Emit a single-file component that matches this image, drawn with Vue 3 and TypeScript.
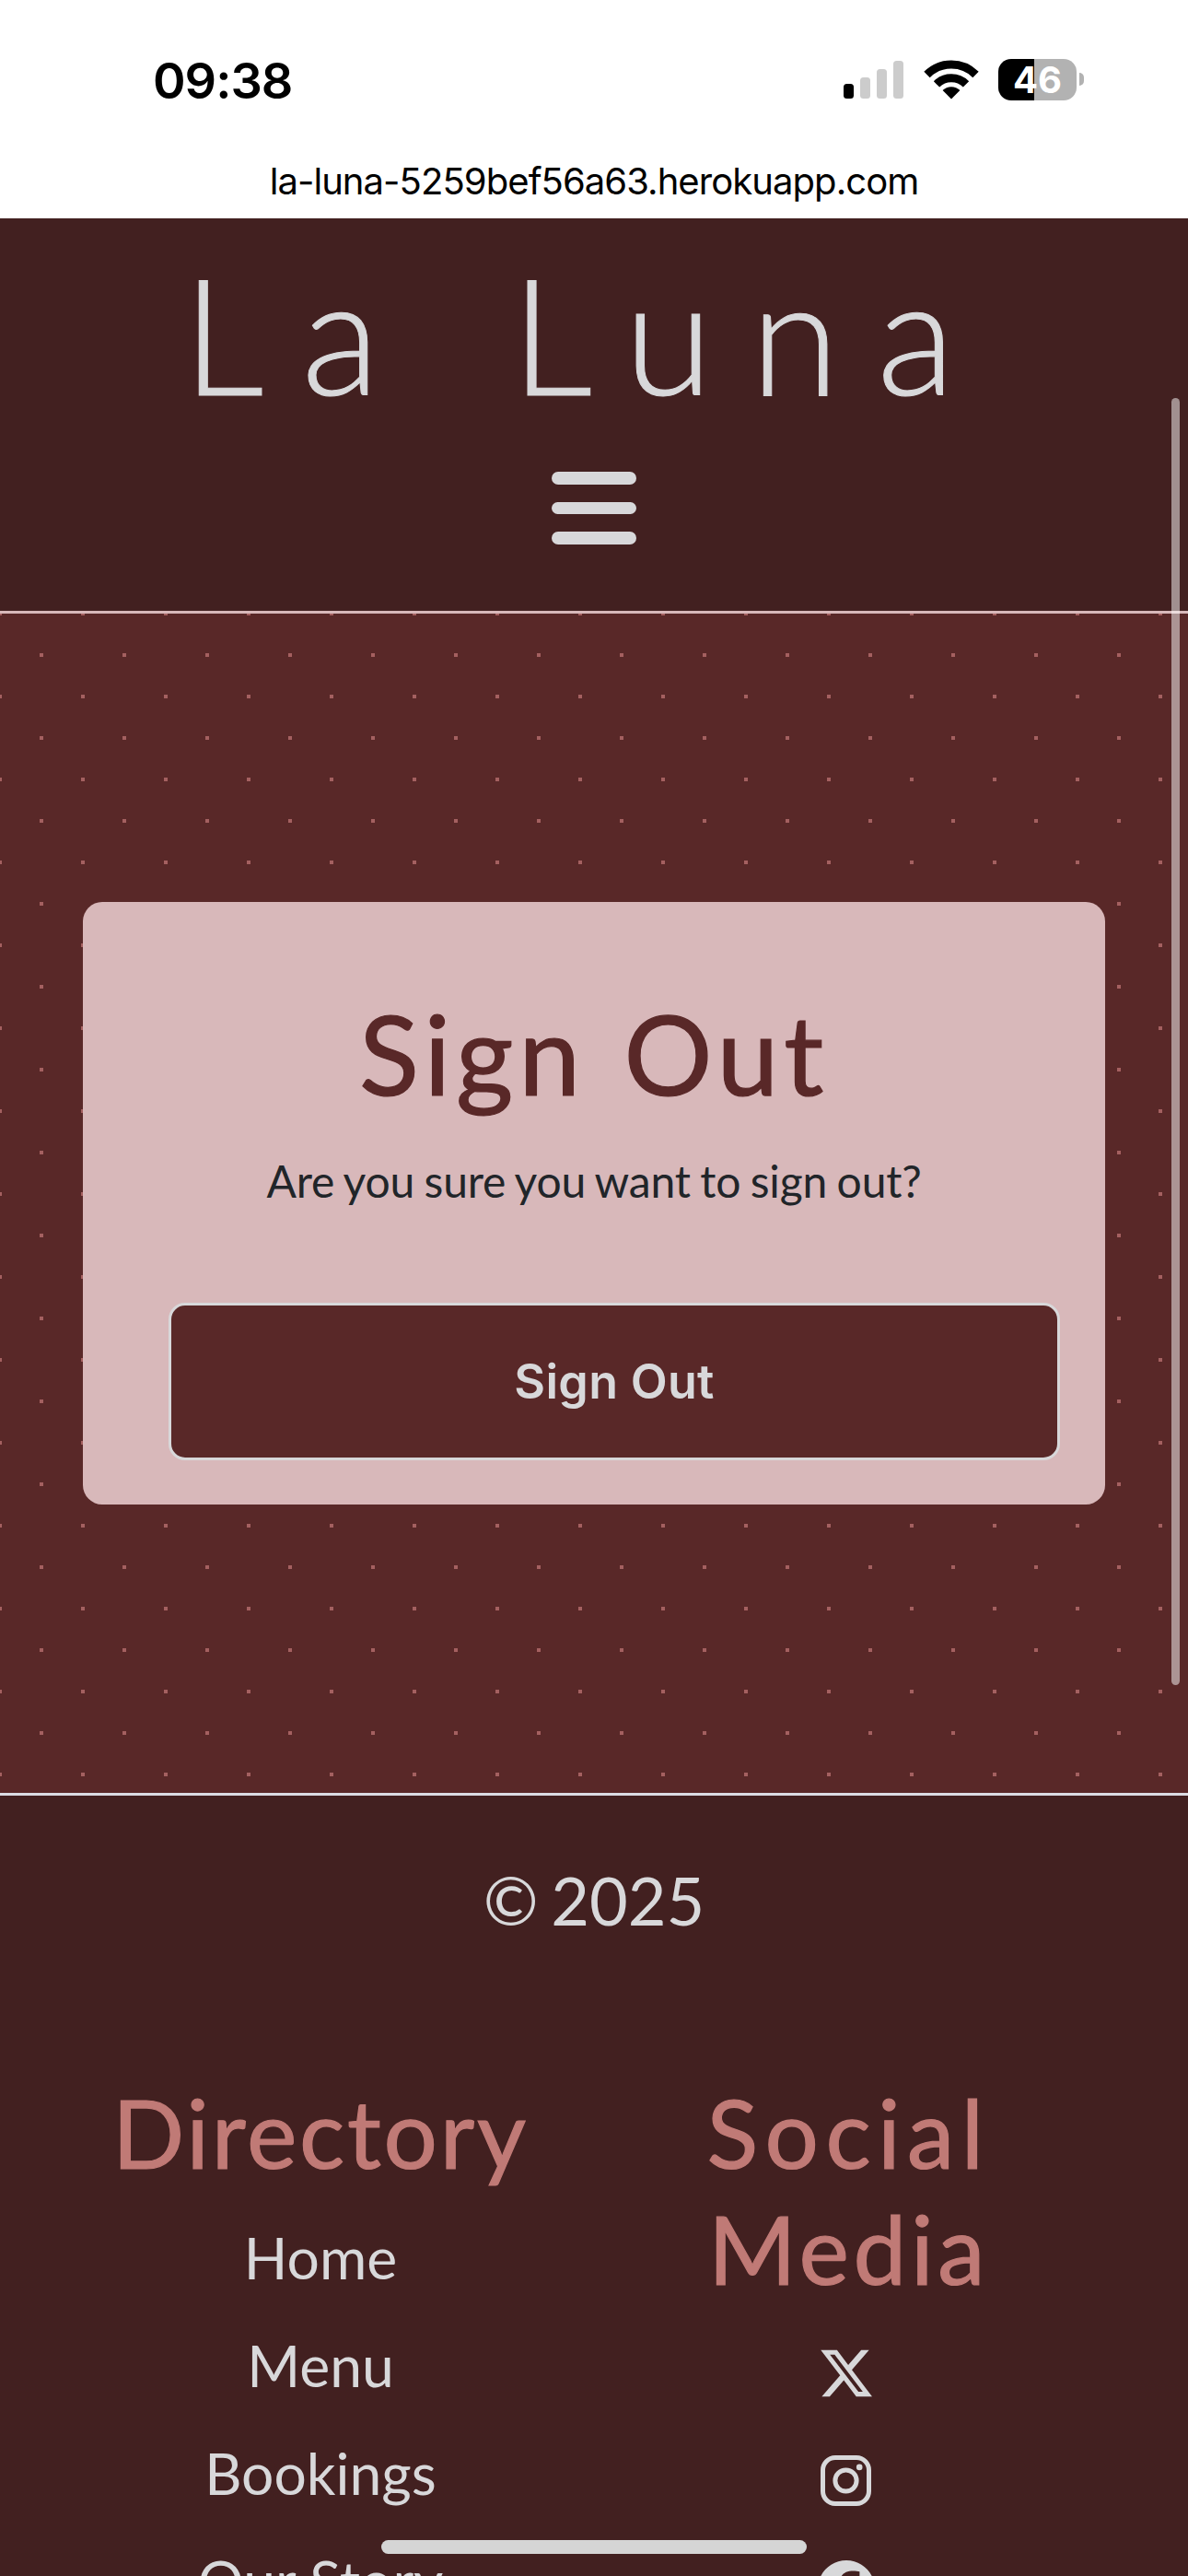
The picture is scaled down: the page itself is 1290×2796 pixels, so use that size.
<script setup lang="ts">
interface SignalBar {
  height: number
  active: boolean
}

const signal: SignalBar[] = [
  { height: 16, active: true },
  { height: 23, active: false },
  { height: 32, active: false },
  { height: 41, active: false },
]

const directory: string[] = ['Home', 'Menu', 'Bookings', 'Our Story']
</script>

<template>
  <div class="screen">
    <div class="status-bar">
      <div class="status-row">
        <span class="clock">09:38</span>
        <div class="indicators">
          <div class="signal">
            <i
              v-for="bar in signal"
              :key="bar.height"
              :class="{ active: bar.active }"
              :style="{ height: bar.height + 'px' }"
            ></i>
          </div>
          <svg class="wifi" width="60" height="43" viewBox="0 0 60 43">
            <g fill="none" stroke="#000" stroke-width="9">
              <path d="M3.5 16A37.5 37.5 0 0 1 56.5 16" />
              <path d="M14 26.4A22.7 22.7 0 0 1 46 26.4" />
            </g>
            <path d="M30 42.5L20.6 33.1A13.3 13.3 0 0 1 39.4 33.1Z" />
          </svg>
          <div class="battery"><span>46</span></div>
          <i class="battery-cap"></i>
        </div>
      </div>
      <div class="url"><span>la-luna-5259bef56a63.herokuapp.com</span></div>
    </div>

    <header class="header">
      <div class="brand">La Luna</div>
      <button class="burger" aria-label="Menu"><i></i><i></i><i></i></button>
    </header>

    <main class="main">
      <section class="card">
        <h1>Sign Out</h1>
        <p>Are you sure you want to sign out?</p>
        <button class="submit">Sign Out</button>
      </section>
    </main>

    <footer class="footer">
      <p class="copyright">© 2025</p>
      <div class="columns">
        <div class="column directory">
          <h2>Directory</h2>
          <a v-for="item in directory" :key="item">{{ item }}</a>
        </div>
        <div class="column social">
          <h2><span class="word-social">Social</span><br /><span class="word-media">Media</span></h2>
          <a>
            <svg width="62" height="62" viewBox="0 0 512 512">
              <path d="M389.2 48h70.6L305.6 224.2 487 464H345L233.7 318.6 106.5 464H35.8L200.7 275.5 26.8 48H172.4L272.9 180.9 389.2 48zM364.4 421.8h39.1L151.1 88h-42L364.4 421.8z" />
            </svg>
          </a>
          <a>
            <svg width="55" height="55" viewBox="0 0 55 55">
              <rect x="2.5" y="2.5" width="50" height="50" rx="13.5" fill="none" stroke="#d8d8da" stroke-width="5" />
              <circle cx="27.5" cy="27.5" r="11.6" fill="none" stroke="#d8d8da" stroke-width="5" />
              <circle cx="42.2" cy="12.9" r="3.3" />
            </svg>
          </a>
          <a>
            <svg width="62" height="62" viewBox="0 0 512 512">
              <path d="M512 256C512 114.6 397.4 0 256 0S0 114.6 0 256C0 376 82.7 476.8 194.2 504.5V334.2H141.4V256h52.8V222.3c0-87.1 39.4-127.5 125-127.5c16.2 0 44.2 3.2 55.7 6.4V172c-6-.6-16.5-1-29.6-1c-42 0-58.2 15.9-58.2 57.2V256h83.6l-14.4 78.2H287V510.1C413.8 494.8 512 386.9 512 256z" />
            </svg>
          </a>
        </div>
      </div>
    </footer>

    <div class="scrollbar"></div>
    <div class="home-indicator"></div>
  </div>
</template>

<style>
body {
  margin: 0;
}
</style>

<style scoped>
.screen {
  position: relative;
  width: 1290px;
  height: 2796px;
  overflow: hidden;
  background: #422020;
  font-family: Lato, sans-serif;
  color: #d8d8da;
}
h1,
h2,
p {
  margin: 0;
  font-weight: 400;
}
button {
  margin: 0;
  padding: 0;
}

.status-bar {
  box-sizing: border-box;
  height: 237px;
  background: #fff;
  color: #000;
  font-family: Inter, sans-serif;
}
.status-row {
  display: flex;
  justify-content: space-between;
  height: 173px;
  padding: 0 113px 0 166px;
}
.clock {
  margin-top: 58px;
  line-height: 60px;
  font-size: 54px;
  font-weight: 600;
  letter-spacing: -1px;
}
.indicators {
  display: flex;
  align-items: flex-start;
}
.signal {
  display: flex;
  align-items: flex-end;
  gap: 7px;
  height: 41px;
  margin-top: 66px;
}
.signal i {
  width: 11px;
  border-radius: 3.5px;
  background: #ccc;
}
.signal i.active {
  background: #000;
}
.wifi {
  margin: 64.5px 0 0 21.5px;
}
.battery {
  width: 85px;
  height: 45px;
  margin: 64px 0 0 21.5px;
  border-radius: 14px;
  background: linear-gradient(90deg, #000 39px, #b2b2b2 39px);
  color: #fff;
  font-size: 40px;
  font-weight: 700;
  line-height: 45px;
  text-align: center;
}
.battery-cap {
  width: 5px;
  height: 14px;
  margin: 79px 0 0 3px;
  border-radius: 0 5px 5px 0;
  background: #b2b2b2;
}
.url {
  font-size: 40px;
  line-height: 48px;
  text-align: center;
  letter-spacing: -0.93px;
}

.header {
  box-sizing: border-box;
  height: 429px;
  padding-top: 34px;
  border-bottom: 3px solid #d8b8ba;
}
.brand {
  height: 180px;
  padding-left: 198px;
  font-size: 175px;
  font-weight: 300;
  line-height: 180px;
  letter-spacing: 41px;
  word-spacing: 13px;
  white-space: nowrap;
  -webkit-text-stroke: 1px #d8d8da;
}
.burger {
  display: flex;
  flex-direction: column;
  gap: 19px;
  width: 92px;
  margin: 61px auto 0;
  border: 0;
  background: none;
}
.burger i {
  width: 92px;
  height: 13.5px;
  border-radius: 7px;
  background: #d8d8da;
}

.main {
  box-sizing: border-box;
  height: 1280px;
  padding: 313px 90px 0;
  background-color: #592828;
  background-image:
    radial-gradient(#a46060 2.3px, transparent 2.3px),
    radial-gradient(#a46060 2.3px, transparent 2.3px);
  background-position: 0 0, 45px 45px;
  background-size: 90px 90px;
}
.card {
  box-sizing: border-box;
  height: 654px;
  padding: 92px 49px 0 93px;
  border-radius: 21px;
  background: #d8b8ba;
}
.card h1 {
  margin: 0 -49px 0 -93px;
  color: #592828;
  font-size: 120px;
  line-height: 144px;
  text-align: center;
  letter-spacing: 5.8px;
  word-spacing: 5px;
  -webkit-text-stroke: 1.2px #592828;
}
.card p {
  margin: 31px -49px 96px -93px;
  color: #212529;
  font-size: 48px;
  line-height: 72px;
  text-align: center;
  letter-spacing: -0.2px;
  word-spacing: -1.5px;
}
.submit {
  display: block;
  box-sizing: border-box;
  width: 968px;
  height: 171px;
  border: 3px solid #d8d8da;
  border-radius: 18px;
  background: #592828;
  color: #d8d8da;
  font-family: Inter, sans-serif;
  font-size: 52px;
  font-weight: 600;
  letter-spacing: 0.3px;
}

.footer {
  border-top: 3px solid #dbdce3;
  padding-top: 70px;
}
.copyright {
  font-size: 72px;
  line-height: 86px;
  text-align: center;
  word-spacing: -5px;
}
.columns {
  display: flex;
  margin-top: 146px;
}
.column {
  display: flex;
  flex-direction: column;
  align-items: center;
}
.directory {
  width: 696px;
}
.social {
  width: 445px;
}
.column h2 {
  margin-bottom: 14px;
  color: #c07a76;
  font-size: 103px;
  line-height: 126px;
  text-align: center;
  white-space: nowrap;
  letter-spacing: 2.8px;
  -webkit-text-stroke: 1.2px #c07a76;
}
.word-social {
  margin-right: -6px;
  letter-spacing: 7.4px;
}
.word-media {
  margin-right: -6px;
  letter-spacing: 4.6px;
}
.column a {
  display: flex;
  align-items: center;
  height: 117px;
  font-size: 62.4px;
  line-height: 117px;
}
.column svg {
  fill: #d8d8da;
}

.scrollbar {
  position: absolute;
  top: 432px;
  left: 1272px;
  width: 9px;
  height: 1397px;
  border-radius: 5px;
  background: rgba(255, 255, 255, 0.5);
}
.home-indicator {
  position: absolute;
  top: 2757px;
  left: 414px;
  width: 462px;
  height: 15px;
  border-radius: 8px;
  background: #d5d5d5;
}
</style>
